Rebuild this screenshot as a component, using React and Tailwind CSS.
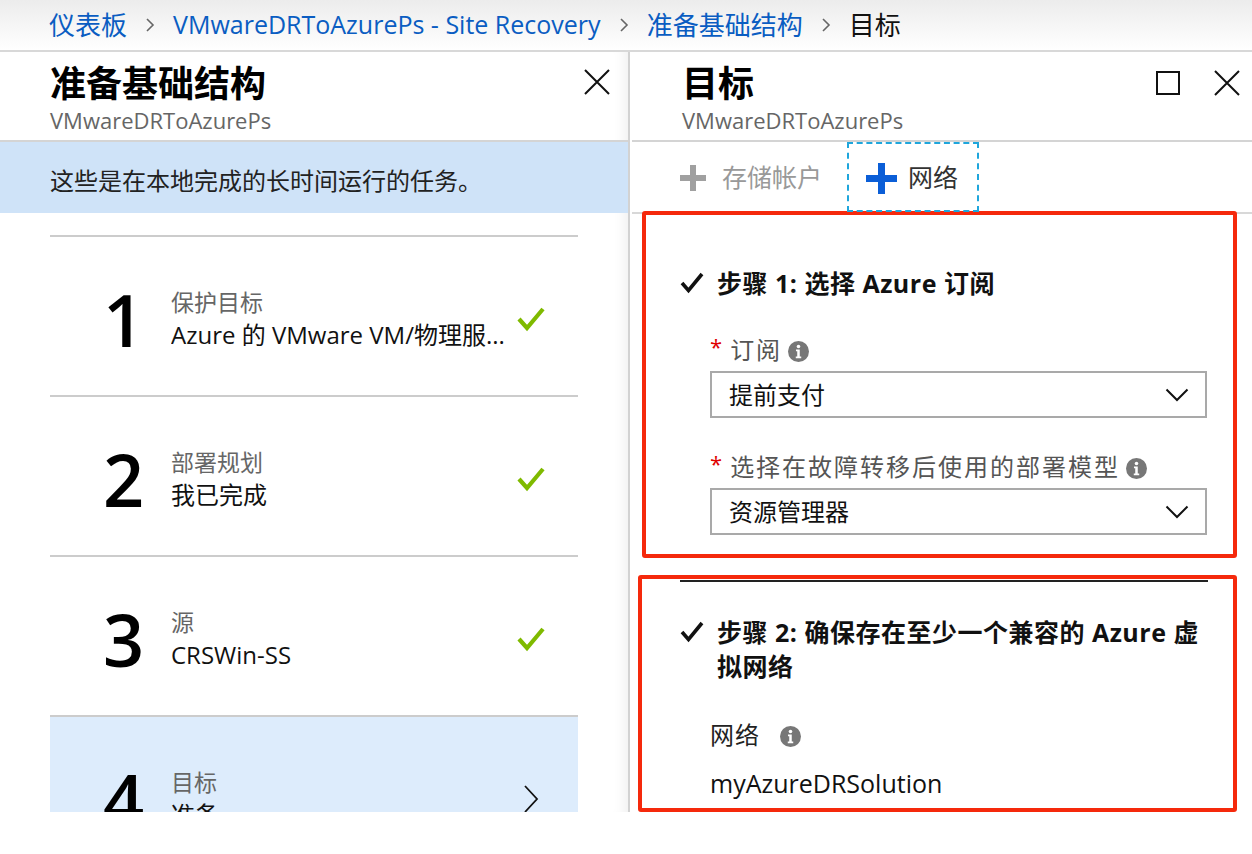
import React from "react";

const Chevron = () => (
    <svg width="10" height="16" viewBox="0 0 10 16" className="mx-[18px] shrink-0">
        <path d="M2 2l6 6-6 6" fill="none" stroke="#666" strokeWidth="1.6" />
    </svg>
);

const CloseIcon = ({ className }) => (
    <svg width="26" height="26" viewBox="0 0 26 26" className={className}>
        <path d="M1 1l24 24M25 1L1 25" stroke="#111" strokeWidth="2" />
    </svg>
);

const GreenCheck = () => (
    <svg width="28" height="26" viewBox="0 0 28 26">
        <path d="M2 13l8 9L26 3" fill="none" stroke="#7fba00" strokeWidth="4.2" />
    </svg>
);

const BlackCheck = () => (
    <svg width="24" height="22" viewBox="0 0 24 22" className="shrink-0">
        <path d="M2 11l6.5 7.5L22 2" fill="none" stroke="#111" strokeWidth="3.6" />
    </svg>
);

const InfoIcon = () => (
    <svg width="21" height="21" viewBox="0 0 20 20" className="shrink-0">
        <circle cx="10" cy="10" r="10" fill="#777" />
        <circle cx="10" cy="5.3" r="1.7" fill="#fff" />
        <path d="M7.6 8.2h3.6v6.6h1.4v1.6H7.4v-1.6h1.4v-5H7.6z" fill="#fff" />
    </svg>
);

const DropChevron = () => (
    <svg width="24" height="14" viewBox="0 0 24 14">
        <path d="M1.5 1.5L12 12 22.5 1.5" fill="none" stroke="#111" strokeWidth="2" />
    </svg>
);

const steps = [
    { n: "1", label: "保护目标", value: "Azure 的 VMware VM/物理服...", done: true },
    { n: "2", label: "部署规划", value: "我已完成", done: true },
    { n: "3", label: "源", value: "CRSWin-SS", done: true },
    { n: "4", label: "目标", value: "准备", done: false },
];

function Dropdown({ value }) {
    return (
        <div className="mt-[4px] w-[497px] h-[47px] border-2 border-[#a9a9a9] flex items-center justify-between pl-[17px] pr-[16px]">
            <span className="text-[24px] text-[#111]">{value}</span>
            <DropChevron />
        </div>
    );
}

export default function App() {
    return (
        <div className="w-[1252px] h-[854px] bg-white overflow-hidden font-['Open_Sans','Noto_Sans_CJK_SC',sans-serif]">
            {/* breadcrumb */}
            <div className="h-[52px] border-b-2 border-[#d8d8d8] bg-gradient-to-b from-[#ececec] to-white flex items-center pl-[49px] text-[25px]">
                <span className="text-[#0a5dc2] text-[26px]">仪表板</span>
                <Chevron />
                <span className="text-[#0a5dc2]">VMwareDRToAzurePs - Site Recovery</span>
                <Chevron />
                <span className="text-[#0a5dc2] text-[26px]">准备基础结构</span>
                <Chevron />
                <span className="text-[#111] text-[26px]">目标</span>
            </div>

            <div className="h-[760px] flex overflow-hidden">
                {/* left blade */}
                <div className="w-[630px] shrink-0 border-r-2 border-[#d2d2d2] shadow-[inset_-14px_0_14px_-12px_rgba(0,0,0,0.08)] overflow-hidden">
                    <div className="h-[90px] border-b-2 border-[#d4d4d4] pl-[50px] pr-[18px] pt-[12px] flex justify-between">
                        <div>
                            <div className="text-[36px] leading-[40px] font-bold text-black">准备基础结构</div>
                            <div className="mt-[3px] text-[22px] leading-[26px] text-[#666]">VMwareDRToAzurePs</div>
                        </div>
                        <CloseIcon className="mt-[5px]" />
                    </div>
                    <div className="h-[71px] bg-[#cfe3f8] flex items-center pt-[6px] pl-[50px] text-[24px] text-[#222]">
                        这些是在本地完成的长时间运行的任务。
                    </div>
                    <div className="mt-[22px] mx-[50px]">
                        {steps.map((s) => (
                            <div
                                key={s.n}
                                className={`h-[160px] border-t-2 border-[#cccccc] flex items-center pt-[6px] pl-[53px] pr-[33px] ${s.done ? "" : "bg-[#ddecfc]"}`}
                            >
                                <div className="w-[68px] shrink-0 text-[72px] leading-none font-semibold text-black">{s.n}</div>
                                <div className="flex-1 min-w-0">
                                    <div className="text-[23px] leading-[32px] text-[#666]">{s.label}</div>
                                    <div className="text-[24px] leading-[34px] text-[#111] truncate">{s.value}</div>
                                </div>
                                <div className="w-[40px] flex justify-end">
                                    {s.done ? (
                                        <GreenCheck />
                                    ) : (
                                        <svg width="16" height="30" viewBox="0 0 16 30" className="mr-[6px]">
                                            <path d="M2 2l12 13L2 28" fill="none" stroke="#111" strokeWidth="1.8" />
                                        </svg>
                                    )}
                                </div>
                            </div>
                        ))}
                    </div>
                </div>

                {/* right blade */}
                <div className="flex-1 ml-[2px] overflow-hidden">
                    <div className="h-[90px] border-b-2 border-[#d4d4d4] pl-[50px] pr-[12px] pt-[12px] flex justify-between">
                        <div>
                            <div className="text-[36px] leading-[40px] font-bold text-black">目标</div>
                            <div className="mt-[3px] text-[22px] leading-[26px] text-[#666]">VMwareDRToAzurePs</div>
                        </div>
                        <div className="flex items-start pt-[7px]">
                            <div className="w-[24px] h-[24px] border-2 border-[#111]" />
                            <CloseIcon className="ml-[34px] -mt-[1px]" />
                        </div>
                    </div>

                    <div className="h-[72px] border-b-2 border-[#d8d8d8] flex items-stretch pl-[48px]">
                        <div className="flex items-center gap-[16px] pt-[2px]">
                            <svg width="26" height="26" viewBox="0 0 26 26">
                                <path d="M10 0h6v10h10v6H16v10h-6V16H0v-6h10z" fill="#a0a0a0" />
                            </svg>
                            <span className="text-[25px] text-[#999]">存储帐户</span>
                        </div>
                        <div className="ml-[25px] w-[132px] h-[70px] border-2 border-dashed border-[#1fa6dc] flex items-center gap-[11px] pl-[17px] pt-[2px]">
                            <svg width="31" height="31" viewBox="0 0 31 31">
                                <path d="M12 0h7v12h12v7H19v12h-7V19H0v-7h12z" fill="#0b5ed7" />
                            </svg>
                            <span className="text-[25px] text-[#333]">网络</span>
                        </div>
                    </div>

                    {/* step 1 */}
                    <div className="-mt-[3px] ml-[10px] w-[595px] h-[347px] border-4 border-[#f5290c] rounded-[3px] pl-[34px] pt-[51px]">
                        <div className="flex items-center gap-[13px]">
                            <BlackCheck />
                            <span className="text-[25px] leading-[34px] font-bold tracking-[0.5px] text-[#111]">步骤 1: 选择 Azure 订阅</span>
                        </div>
                        <div className="ml-[30px]">
                            <div className="mt-[33px] flex items-center h-[34px]">
                                <span className="text-[22px] text-[#e00000] mr-[8px] -mt-[8px]">*</span>
                                <span className="text-[24px] text-[#555] tracking-[2px]">订阅</span>
                                <span className="ml-[6px] mt-[2px]"><InfoIcon /></span>
                            </div>
                            <Dropdown value="提前支付" />
                            <div className="mt-[32px] flex items-center h-[34px]">
                                <span className="text-[22px] text-[#e00000] mr-[8px] -mt-[8px]">*</span>
                                <span className="text-[24px] text-[#555] tracking-[2px]">选择在故障转移后使用的部署模型</span>
                                <span className="ml-[6px] mt-[2px]"><InfoIcon /></span>
                            </div>
                            <Dropdown value="资源管理器" />
                        </div>
                    </div>

                    {/* step 2 */}
                    <div className="mt-[17px] ml-[6px] w-[599px] h-[237px] border-4 border-[#f5290c] rounded-[3px] pl-[38px]">
                        <div className="w-[528px] h-[2px] bg-[#222] mt-[1px]" />
                        <div className="mt-[33px] flex items-start gap-[13px]">
                            <div className="pt-[6px]"><BlackCheck /></div>
                            <span className="text-[25px] leading-[34px] font-bold tracking-[0.5px] text-[#111]">
                                步骤 2: 确保存在至少一个兼容的 Azure 虚
                                <br />
                                拟网络
                            </span>
                        </div>
                        <div className="ml-[30px]">
                            <div className="mt-[35px] flex items-center h-[34px]">
                                <span className="text-[24px] text-[#222] tracking-[1px]">网络</span>
                                <span className="ml-[20px] mt-[2px]"><InfoIcon /></span>
                            </div>
                            <div className="mt-[14px] text-[25px] leading-[34px] text-[#111]">myAzureDRSolution</div>
                        </div>
                    </div>
                </div>
            </div>
        </div>
    );
}
